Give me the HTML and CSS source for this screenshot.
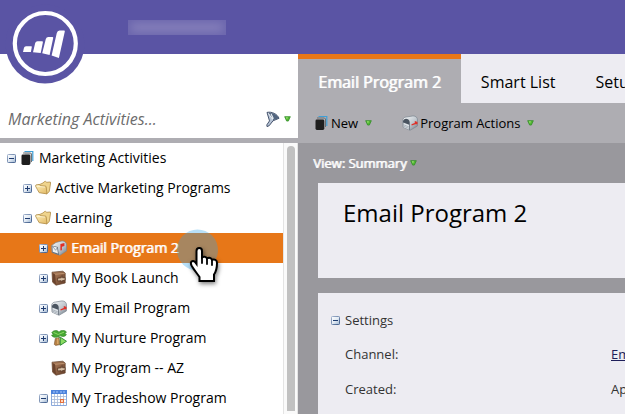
FILE: index.html
```html
<!DOCTYPE html>
<html lang="en">
<head>
<meta charset="utf-8">
<title>Marketing Activities</title>
<link rel="stylesheet" href="styles.css">
</head>
<body>
<svg class="sprite" aria-hidden="true">
  <defs>
    <linearGradient id="g-box" x1="0" y1="0" x2="1" y2="1"><stop offset="0" stop-color="#fff"/><stop offset=".5" stop-color="#e3ebf4"/><stop offset="1" stop-color="#9db4cf"/></linearGradient>
    <linearGradient id="g-edge" x1="0" y1="0" x2="1" y2="1"><stop offset="0" stop-color="#a3b4ce"/><stop offset="1" stop-color="#3f5c8a"/></linearGradient>
    <linearGradient id="g-folder" x1="0" y1="0" x2="1" y2="1"><stop offset="0" stop-color="#fdf0bd"/><stop offset="1" stop-color="#e2b863"/></linearGradient>
    <linearGradient id="g-metal" x1="0" y1="0" x2="1" y2="1"><stop offset="0" stop-color="#fafbfc"/><stop offset=".6" stop-color="#bcc4cb"/><stop offset="1" stop-color="#6b7580"/></linearGradient>
    <linearGradient id="g-brown" x1="0" y1="0" x2="1" y2="1"><stop offset="0" stop-color="#b58662"/><stop offset="1" stop-color="#633c26"/></linearGradient>
  </defs>
  <symbol id="plus" viewBox="0 0 9 9"><rect x=".5" y=".5" width="8" height="8" rx=".8" fill="url(#g-box)" stroke="url(#g-edge)"/><path d="M2 4.5h5M4.5 2v5" stroke="#1f3c70"/></symbol>
  <symbol id="minus" viewBox="0 0 9 9"><rect x=".5" y=".5" width="8" height="8" rx=".8" fill="url(#g-box)" stroke="url(#g-edge)"/><path d="M2 4.5h5" stroke="#1f3c70"/></symbol>
  <symbol id="stack" viewBox="0 0 16 16"><path d="M5.500 1.500h8.300v9.500" fill="none" stroke="#3f9fd6" stroke-width="1.200"/><path d="M5 2.500h7l1 1v8l-1.600 2z" fill="#b5bac0" fill-opacity=".6"/><path d="M4 3h7.500l1 1v8" fill="none" stroke="#55585c" stroke-width=".8"/><rect x="2.500" y="4.500" width="8.800" height="10.500" rx="1.400" fill="#1e1e1e"/></symbol>
  <symbol id="folder" viewBox="0 0 16 16"><path d="M3.500 5 8 3l1.200-1.300 1.500-.3 1 .9 3.600-.3.300 1-1.400 8.700-2.500 2.100z" fill="#efd48c" stroke="#b08c46" stroke-width=".8" stroke-linejoin="round"/><path d="M.5 6 1 4.900l3.300-.5 1.100 1.300 4.900.4c.6 0 .8.300.9.900l.8 6.900-7.800-1.200C2.500 10.700 2 8 .5 6z" fill="url(#g-folder)" stroke="#b08c46" stroke-width=".8" stroke-linejoin="round"/><path d="m1.500 6.200 8.500.9" stroke="#fff8d9" stroke-width=".8"/></symbol>
  <symbol id="mailbox" viewBox="0 0 16 16"><path d="M.6 6C.6 3.300 2.300 2 4.500 2L11 .9c3 0 4.500 1.900 4.500 4.100l-.1 6L8 15.300 1 12.100z" fill="url(#g-metal)" stroke="#7c8690" stroke-width=".7"/><path d="M1 12V6.200C1.400 2.700 7 2.800 7.700 6.900V15z" fill="#4a5460"/><path d="m1.300 7.500 5.800 2.300v4.900l-5.800-2.500z" fill="#dde2e7"/><path d="m1.600 9.800 5.300 2.100M1.600 11.200l5.300 2.200" stroke="#8b959f" stroke-width=".6"/><path d="m9.400 9.300 3.400-1.400V6l2.700.9v2.400l-2.200-.1-3.600 1.400z" fill="#e12f27"/></symbol>
  <symbol id="mailflag" viewBox="0 0 16 16"><path d="M.6 5.400 5 2.400l6-1.500c3 0 4.500 1.800 4.600 4v6L9 15.300l-8-2.900z" fill="url(#g-metal)" stroke="#7c8690" stroke-width=".7"/><path d="m.8 5.500 6 1.500L8 15.200l-7-2.800z" fill="#66717d"/><path d="m1.500 6.300 4.500 1.200 1 6L1.700 11.700z" fill="#eef1f4"/><path d="m1.700 6.500 3 3.800 1.500-2.600" stroke="#7b8793" fill="none" stroke-width=".7"/><path d="M9.400 10.500V4l4-1v3l-2.500.7v3.600z" fill="#e12f27"/></symbol>
  <symbol id="book" viewBox="0 0 16 16"><path d="m1 2.200 10.800-1L14.200 3v10L5 15.200l-3.400-3z" fill="url(#g-brown)" stroke="#62412b" stroke-width=".7"/><path d="m1.400 2.800 2.700 1.700L5 14.400l-3-2.500z" fill="#6a432d"/><path d="m4.200 4.300 9.500-1" stroke="#c59a76" stroke-width=".8"/><path d="m6.600 8.200 3.700-.4V6l1.300-.2v2l2.500-.2v2.600l-2.600.4v1l-1.300.2v-1.100l-3.600.2z" fill="#d7bfa4" stroke="#49291a" stroke-width=".7"/></symbol>
  <symbol id="palm" viewBox="0 0 16 16"><path d="M4.300 8.500 8 7.800l1 6.800-4.300.8-1.400-1z" fill="#b98246" stroke="#75502c" stroke-width=".6"/><path d="M6.800 8.400V14" stroke="#e0b775"/><path d="M7.500 6.500C5.800 7.900 1.200 7.700.6 5l2-.3L.8 2.700C2.400-.2 7-.1 8 2.400 9.100-.3 14.400-.2 15.500 2.300l-1.600.9 1.500 1.500c-1.500 2.400-5.200 2.100-7.200.4l.2 3z" fill="#46a833" stroke="#2c7a21" stroke-width=".6"/><path d="M2.500 2.400 7.200 4.500l5.800-2.300" fill="none" stroke="#8dd667"/><path d="m9.300 7.200 6.200 4.100-6.200 4z" fill="#8bdc63" stroke="#238427" stroke-width=".9"/></symbol>
  <symbol id="calendar" viewBox="0 0 16 16"><path d="M.5.5h15v15H.5z" fill="#fff" stroke="#8aa9dc"/><path d="M0 0h16v4H0z" fill="#4d83dc"/><path d="M3 1v2M6 1v2M10 1v2M13 1v2" stroke="#a9c8fa"/><path d="M1 6.500h14M1 9.500h14M1 12.500h14M3.500 4v11M6.500 4v11M9.500 4v11M12.500 4v11" stroke="#a7b9d7" stroke-width=".8"/><rect x="9.500" y="9.500" width="3" height="3" fill="#ffd7bd" stroke="#e56f3b"/></symbol>
  <symbol id="down" viewBox="0 0 8 7"><path d="M.7.8h6.600L5 5.900H3z" fill="#52b832" stroke="#328c28" stroke-width=".9"/><path d="M2 1.600h2.500L3.400 4z" fill="#98df70"/></symbol>
</svg>

<header class="topbar">
  <a class="logo" href="#" aria-label="Home">
    <svg viewBox="0 0 80 80" width="80" height="80"><circle cx="40" cy="40" r="39.500" fill="#5a54a4"/><circle cx="40.300" cy="39.500" r="30.500" fill="none" stroke="#fff" stroke-width="4.200"/><path d="M18 48 19 43.700q.4-1.500 2-1.500h5.200q.8 0 .6.800l-.9 5zM28 48.300l2.200-9.200q.5-1.900 2.300-1.900h4.600q1 0 .8 1L35.700 49zM37.200 49.200l3.600-14.300q.6-2 2.500-2h4.100q1 0 .8 1l-3.600 17zM46.600 51.500l5.200-22.600q.6-2.500 2.700-2.500h4.500q1.100 0 .8 1.200L53.900 54z" fill="#fff"/></svg>
  </a>
  <span class="account"></span>
</header>

<div class="workspace">
  <aside class="sidebar">
    <div class="search">
      <input class="search-input" type="text" aria-label="Filter activities" placeholder="Marketing Activities...">
      <button class="plain filter" aria-label="Filter">
        <svg viewBox="0 0 16 16" width="16" height="16"><path d="M2 1.400C6.800.4 12.300 3 14 7.300L8 9.800 4.200 14.700 2 15.600l-.2-1.700 2.700-4z" fill="#b7c4d6" stroke="#35445f" stroke-width=".9"/><path d="m2.400 2 5.500 7.200L14 7.300C12 3.500 8 2 5.500 2z" fill="#52657f"/><path d="m3.200 2.300 4.600 6.300M6 2.800l2.400 4.900" stroke="#edf2f7" stroke-width="1.100"/></svg>
        <svg class="down"><use href="#down"/></svg>
      </button>
    </div>
    <div class="tree-area">
      <ul class="tree">
        <li class="row"><button class="plain toggle" aria-label="Collapse"><svg><use href="#minus"/></svg></button><svg class="icon"><use href="#stack"/></svg><span>Marketing Activities</span></li>
        <li class="row child"><button class="plain toggle" aria-label="Expand"><svg><use href="#plus"/></svg></button><svg class="icon"><use href="#folder"/></svg><span>Active Marketing Programs</span></li>
        <li class="row child"><button class="plain toggle" aria-label="Collapse"><svg><use href="#minus"/></svg></button><svg class="icon"><use href="#folder"/></svg><span>Learning</span></li>
        <li class="row leaf selected"><button class="plain toggle" aria-label="Expand"><svg><use href="#plus"/></svg></button><svg class="icon"><use href="#mailflag"/></svg><span class="strong">Email Program 2</span></li>
        <li class="row leaf"><button class="plain toggle" aria-label="Expand"><svg><use href="#plus"/></svg></button><svg class="icon"><use href="#book"/></svg><span>My Book Launch</span></li>
        <li class="row leaf"><button class="plain toggle" aria-label="Expand"><svg><use href="#plus"/></svg></button><svg class="icon"><use href="#mailbox"/></svg><span>My Email Program</span></li>
        <li class="row leaf"><button class="plain toggle" aria-label="Expand"><svg><use href="#plus"/></svg></button><svg class="icon"><use href="#palm"/></svg><span>My Nurture Program</span></li>
        <li class="row leaf"><span class="toggle"></span><svg class="icon"><use href="#book"/></svg><span>My Program -- AZ</span></li>
        <li class="row leaf"><button class="plain toggle" aria-label="Collapse"><svg><use href="#minus"/></svg></button><svg class="icon"><use href="#calendar"/></svg><span>My Tradeshow Program</span></li>
      </ul>
      <div class="scrollbar"><div class="thumb"></div></div>
    </div>
  </aside>

  <main class="main">
    <nav class="tabs">
      <a class="tab active strong" href="#">Email Program 2</a>
      <a class="tab" href="#">Smart List</a>
      <a class="tab" href="#">Setup</a>
    </nav>
    <div class="toolbar">
      <button class="plain tool"><svg class="icon"><use href="#stack"/></svg>New<svg class="down"><use href="#down"/></svg></button>
      <button class="plain tool"><svg class="icon"><use href="#mailbox"/></svg>Program Actions<svg class="down"><use href="#down"/></svg></button>
    </div>
    <div class="content">
      <button class="plain view"><span class="strong">View: Summary</span><svg class="down"><use href="#down"/></svg></button>
      <section class="panel title-panel"><h1>Email Program 2</h1></section>
      <section class="panel settings">
        <h2><button class="plain toggle" aria-label="Collapse settings"><svg><use href="#minus"/></svg></button>Settings</h2>
        <dl>
          <dt>Channel:</dt><dd><a href="#">Email</a></dd>
          <dt>Created:</dt><dd>Apr</dd>
        </dl>
      </section>
    </div>
  </main>
</div>

<svg class="pointer" viewBox="0 0 50 54" aria-hidden="true">
  <circle cx="20.500" cy="21" r="20.500" fill="#2ba3ee" fill-opacity=".34"/>
  <path class="hand" d="M19.500 22c0-4 5.500-4 5.500 0v6.500c2-1.500 4.500-.5 5 1 2-1.300 4.500-.5 5 1.200 3-.8 5 .5 5 3.300 0 5-.5 8-3 11.500V52H22.500v-4c-2-3-5.500-7-8-11.500-1.800-3.500 1-5.800 3.500-3.500l1.500 2z" fill="#fff" stroke="#000" stroke-width="2"/>
  <path d="M25 28v6M30 30v5M35 31v5" stroke="#000" stroke-width="1.800" stroke-linecap="round"/>
</svg>
</body>
</html>
```
FILE: styles.css
```css
* { box-sizing: border-box; }

body {
  margin: 0;
  height: 100vh;
  display: flex;
  flex-direction: column;
  overflow: hidden;
  font: 14px/20px "Open Sans", "Noto Sans", sans-serif;
  color: #000;
  background: #fff;
}

a { color: inherit; text-decoration: none; }
svg { display: block; flex: none; }
.sprite { position: absolute; width: 0; height: 0; }

.plain {
  display: flex;
  align-items: center;
  padding: 0;
  border: 0;
  background: none;
  font: inherit;
  color: inherit;
}

/* Emphasis that keeps the width of the regular weight */
.strong { color: #fff; text-shadow: 1px 0 rgba(255, 255, 255, .85); }

.icon { width: 16px; height: 16px; }
.down { width: 7px; height: 6px; }
.toggle, .toggle svg { flex: none; width: 9px; height: 9px; }

.topbar {
  position: relative;
  flex: none;
  height: 54px;
  padding: 20px 128px;
  background: #5a54a4;
}

.logo { position: absolute; left: 5px; top: 4px; z-index: 1; }

.account {
  display: block;
  width: 98px;
  height: 15px;
  background: #8680bb;
  box-shadow: inset 0 0 8px 3px #6b65ad;
}

.workspace {
  flex: 1;
  min-height: 0;
  display: grid;
  grid-template-columns: 298px minmax(0, 1fr);
}

.sidebar { display: flex; flex-direction: column; min-height: 0; }

.search {
  flex: none;
  display: flex;
  align-items: flex-end;
  justify-content: space-between;
  height: 89px;
  padding: 0 7px 6px 8px;
  border-bottom: 5px solid #aeadb2;
}

.search-input {
  flex: 1;
  min-width: 0;
  height: 26px;
  padding: 0;
  border: 0;
  background: none;
  font: italic 16px/24px "Open Sans", "Noto Sans", sans-serif;
}
.search-input::placeholder { color: #6c6c6c; opacity: 1; }
.filter { gap: 3px; height: 26px; }

.tree-area { flex: 1; min-height: 0; display: flex; }

.tree {
  flex: 1;
  margin: 0;
  padding: 0;
  list-style: none;
  overflow: hidden;
}

.row {
  display: flex;
  align-items: center;
  height: 30px;
  padding-left: 7px;
  white-space: nowrap;
}
.row .icon { margin: 0 4px 0 3px; }
.child { padding-left: 23px; }
.leaf { padding-left: 39px; }
.selected { background: #e77718; }

.scrollbar {
  width: 15px;
  padding: 3px;
  border-left: 1px solid #e4e4e4;
  border-right: 1px solid #e4e4e4;
  background: #fafafa;
}
.thumb { width: 8px; height: 100%; border-radius: 4px 4px 0 0; background: #c1c1c1; }

.main { display: flex; flex-direction: column; min-height: 0; background: #99989d; }

.tabs {
  flex: none;
  display: flex;
  height: 49px;
  overflow: hidden;
  background: #edecf2;
  font-size: 16px;
}
.tab { flex: none; padding: 5px 20px 0; line-height: 46px; }
.active {
  padding-top: 0;
  border-top: 5px solid #e77718;
  background: #aeadb2;
}

.toolbar {
  flex: none;
  display: flex;
  align-items: center;
  gap: 30px;
  height: 40px;
  padding: 0 15px;
  background: #aeadb2;
  font-size: 13px;
}
.tool { gap: 2px; }
.tool .down { margin-left: 5px; }

.content {
  flex: 1;
  min-height: 0;
  display: flex;
  flex-direction: column;
  padding: 10px 0 0 20px;
}
.view {
  gap: 4px;
  height: 20px;
  margin: 0 0 10px -5px;
  font-size: 13px;
}

.panel { background: #edecf2; }
.title-panel { flex: none; height: 95px; margin-bottom: 15px; padding: 12px 25px; }
h1 { margin: 0; font-size: 24px; font-weight: 400; line-height: 36px; }

.settings { flex: 1; padding: 17px 13px 0; color: #333; font-size: 13px; }
h2 {
  display: flex;
  align-items: center;
  gap: 5px;
  margin: 0 0 7px;
  font-size: 13px;
  font-weight: 400;
  line-height: 20px;
}
dl {
  display: grid;
  grid-template-columns: 266px 1fr;
  margin: 0 0 0 14px;
  line-height: 35px;
}
dd { margin: 0; }
dd a { color: #1e1e5a; text-decoration: underline; }

.pointer { position: absolute; left: 177px; top: 229px; width: 50px; height: 54px; overflow: visible; }
.hand { filter: drop-shadow(1px 2px 2px rgba(0, 0, 0, .5)); }
```
